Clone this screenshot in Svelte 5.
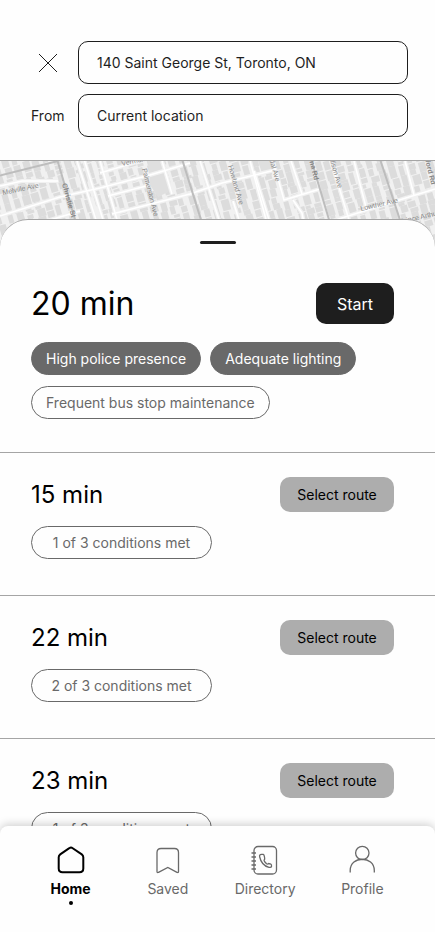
<script lang="ts">
	type Tag = { text: string; met: boolean };
	type Route = { minutes: number; tags: Tag[] };

	let destination = $state("140 Saint George St, Toronto, ON");
	let origin = $state("Current location");
	let selected = $state(0);
	let page = $state("Home");

	const routes: Route[] = [
		{
			minutes: 20,
			tags: [
				{ text: "High police presence", met: true },
				{ text: "Adequate lighting", met: true },
				{ text: "Frequent bus stop maintenance", met: false },
			],
		},
		{ minutes: 15, tags: [{ text: "1 of 3 conditions met", met: false }] },
		{ minutes: 22, tags: [{ text: "2 of 3 conditions met", met: false }] },
		{ minutes: 23, tags: [{ text: "1 of 3 conditions met", met: false }] },
	];

	const pages = ["Home", "Saved", "Directory", "Profile"];

	// houses sit on a grid that is turned with the streets
	function makeHouses() {
		let seed = 7;
		const rand = () => {
			seed = (seed * 16807) % 2147483647;
			return seed / 2147483647;
		};
		const houses = [];
		for (let x = -40; x < 450; x += 10) {
			let y = -20;
			while (y < 220) {
				const h = 3 + Math.round(rand() * 9);
				const w = 5 + Math.round(rand() * 3);
				houses.push({ x: x + Math.round(rand() * 2), y, w, h });
				y += h + Math.round(rand());
			}
		}
		return houses;
	}
	const houses = makeHouses();

	const streets = [
		"M0 55 60 36 100 27 150 14 190 2",
		"M100 12 140 0",
		"M77 0 97 62",
		"M84 -2 104 62",
		"M100 0 118 62",
		"M108 35 150 24",
		"M112 53 190 33 222 22 275 9",
		"M162 0 172 33",
		"M200 0 220 62",
		"M233 40 240 62",
		"M250 0 267 62",
		"M254 10 270 62",
		"M273 0 284 39 320 28",
		"M291 0 302 33",
		"M293 39 302 52 304 62",
		"M334 10 350 62",
		"M354 0 367 50",
		"M326 62 380 45 435 28",
		"M405 0 414 34",
		"M0 25 22 20 58 20",
		"M40 62 80 50",
	];

	const mainRoads = ["M-2 15 58 0", "M57 -2 76 62", "M182 -2 202 62", "M311 -2 330 62", "M380 -2 401 62"];

	const names = [
		{ text: "Melville Ave", x: 3, y: 34, turn: -12, bold: false },
		{ text: "Christie St", x: 62, y: 23, turn: 74, bold: true },
		{ text: "Vermont", x: 122, y: 5, turn: -12, bold: false },
		{ text: "Palmerston Ave", x: 142, y: 8, turn: 76, bold: false },
		{ text: "Howland Ave", x: 228, y: 5, turn: 74, bold: false },
		{ text: "Kendal Ave", x: 266, y: -13, turn: 74, bold: false },
		{ text: "Spadina Rd", x: 305, y: -18, turn: 76, bold: true },
		{ text: "Madison Ave", x: 327, y: -11, turn: 74, bold: false },
		{ text: "Lowther Ave", x: 361, y: 50, turn: -13, bold: false },
		{ text: "Bedford Rd", x: 422, y: -13, turn: 76, bold: true },
		{ text: "Prince Arthur Ave", x: 400, y: 63, turn: -13, bold: false },
	];
</script>

<div class="screen">
	<header class="search">
		<button class="close" aria-label="Close">
			<svg width="20" height="20" viewBox="0 0 20 20"><path d="M1 1 19 19M19 1 1 19" /></svg>
		</button>
		<input type="text" aria-label="Destination" bind:value={destination} />
		<label for="origin">From</label>
		<input type="text" id="origin" bind:value={origin} />
	</header>

	<main>
		<div class="map">
			<svg viewBox="0 0 435 100" preserveAspectRatio="xMidYMin slice" aria-hidden="true">
				<g transform="rotate(-16)" fill="#dcdcdc">
					{#each houses as house}
						<rect x={house.x} y={house.y} width={house.w} height={house.h} />
					{/each}
				</g>
				<path d="M148 0H162L170 30 158 36 150 24ZM258 0 272 0 276 9 262 12Z" fill="#dfdfdf" />
				<g fill="none" stroke="#f1f1f1" stroke-width="4">
					{#each streets as d}
						<path {d} />
					{/each}
				</g>
				<g fill="none" stroke="#ffffff" stroke-width="1.500">
					{#each streets as d}
						<path {d} />
					{/each}
				</g>
				<g fill="none" stroke="#bdbdbd" stroke-width="2">
					{#each mainRoads as d}
						<path {d} />
					{/each}
				</g>
				{#each names as name}
					<text class:bold={name.bold} transform="translate({name.x} {name.y}) rotate({name.turn})">{name.text}</text>
				{/each}
			</svg>
		</div>

		<div class="sheet">
			<div class="handle"></div>
			{#each routes as route, i}
				<section class="route" class:first={i == 0}>
					<div class="routeTop">
						<h2>{route.minutes} min</h2>
						{#if i == 0}
							<button class="start">Start</button>
						{:else}
							<button class="select" aria-pressed={selected == i} onclick={() => (selected = i)}>Select route</button>
						{/if}
					</div>
					<div class="tags">
						{#each route.tags as tag}
							<span class="tag" class:met={tag.met}>{tag.text}</span>
						{/each}
					</div>
				</section>
			{/each}
		</div>
	</main>

	<nav>
		{#each pages as name}
			<a href="#{name.toLowerCase()}" class:active={page == name} onclick={() => (page = name)}>
				<svg width="30" height="30" viewBox="0 0 30 30">
					{#if name == "Home"}
						<path d="M13.3 3.2Q15 2 16.7 3.2L25.8 9.4Q27.3 10.5 27.3 12.3V23.5Q27.3 27.3 23.5 27.3H6.5Q2.7 27.3 2.7 23.5V12.3Q2.7 10.5 4.2 9.4Z" />
					{:else if name == "Saved"}
						<path d="M4 26.500V7.500Q4 3.500 8 3.500H21.500Q25.500 3.500 25.500 7.500V26.500Q25.500 28.200 24 27.300L14.800 22.500 5.500 27.300Q4 28.200 4 26.500Z" />
					{:else if name == "Directory"}
						<rect x="4" y="1.500" width="22.500" height="27.500" rx="4" />
						<path d="M1.500 8H6M1.500 12H6M1.500 16H6M1.500 20H6M1.500 24H6" />
						<path d="M9.700 12Q9 9.500 11.500 9.300L13.300 9.300Q14.200 9.600 14.500 12L14.700 14Q13.500 15.500 14.500 16.500L16.500 18.800Q17.500 19.400 18.700 18.500L20.800 19Q21.800 19.500 21.500 21.500Q21.200 22.700 19 22.300Q11.500 20.500 9.700 12Z" />
					{:else}
						<circle cx="15.300" cy="8" r="6.700" />
						<path d="M3.200 27.500V25.500C3.200 10.500 27.300 10.500 27.300 25.500V27.500" />
					{/if}
				</svg>
				<span>{name}</span>
			</a>
		{/each}
	</nav>
</div>

<style>
	:global(body) {
		background-color: #fefefe;
	}

	.screen {
		display: flex;
		flex-direction: column;
		height: 100vh;
		font-family: "Inter", sans-serif;
		font-size: 14px;
		color: #1e1e1e;
		overflow: hidden;
	}

	button,
	input {
		box-sizing: border-box;
		font: inherit;
		color: inherit;
	}

	button {
		border: none;
		padding: 0;
		cursor: pointer;
	}

	.search {
		display: grid;
		grid-template-columns: 34px 1fr;
		align-items: center;
		gap: 10px 13px;
		padding: 41px 27px 23px 31px;
		border-bottom: 1px solid #a5a5a5;
	}

	.search input {
		width: 100%;
		height: 43px;
		padding: 0 18px;
		border: 1px solid #1e1e1e;
		border-radius: 10px;
		background-color: #fefefe;
	}

	.close {
		display: flex;
		justify-content: center;
		background: none;
	}

	.close svg {
		fill: none;
		stroke: #1e1e1e;
	}

	main {
		flex: 1;
		min-height: 0;
		overflow: hidden;
	}

	.map {
		height: 100px;
		background-color: #f1f1f1;
	}

	.map svg {
		display: block;
		width: 100%;
		height: 100%;
	}

	.map text {
		font-family: "Liberation Sans", sans-serif;
		font-size: 7px;
		fill: #858585;
	}

	.map .bold {
		font-weight: bold;
	}

	.sheet {
		position: relative;
		margin-top: -42px;
		padding-top: 21px;
		border-top: 1px solid #a5a5a5;
		border-radius: 28px 28px 0 0;
		background-color: #fefefe;
	}

	.handle {
		width: 36px;
		height: 3px;
		margin: 0 auto;
		border-radius: 2px;
		background-color: #1e1e1e;
	}

	.route {
		padding: 24px 41px 36px 31px;
		border-top: 1px solid #a5a5a5;
	}

	.route.first {
		padding-top: 39px;
		padding-bottom: 33px;
		border-top: none;
	}

	.routeTop {
		display: flex;
		justify-content: space-between;
		align-items: center;
		margin-bottom: 14px;
	}

	.first .routeTop {
		margin-bottom: 18px;
	}

	h2 {
		margin: 0;
		font-size: 24px;
		font-weight: 400;
		line-height: 35px;
		color: #000000;
	}

	.first h2 {
		font-size: 32px;
		line-height: 41px;
	}

	.start {
		width: 78px;
		height: 41px;
		border-radius: 10px;
		background-color: #1e1e1e;
		color: #fefefe;
		font-size: 16px;
	}

	.select {
		width: 114px;
		height: 35px;
		border-radius: 10px;
		background-color: #adadad;
		color: #000000;
	}

	.tags {
		display: flex;
		flex-wrap: wrap;
		gap: 11px 9px;
	}

	.tag {
		box-sizing: border-box;
		min-width: 181px;
		padding: 0 16px;
		border: 1px solid #696969;
		border-radius: 17px;
		line-height: 31px;
		color: #696969;
		text-align: center;
	}

	.first .tag {
		min-width: 0;
		padding: 0 14px;
	}

	.tag.met {
		background-color: #696969;
		color: #fefefe;
	}

	nav {
		position: relative;
		display: grid;
		grid-template-columns: repeat(4, 1fr);
		padding: 19px 24px 27px 22px;
		border-radius: 8px 8px 0 0;
		background-color: #fefefe;
		box-shadow: 0 -2px 8px rgba(0, 0, 0, 0.18);
	}

	nav a {
		display: flex;
		flex-direction: column;
		align-items: center;
		color: #696969;
		line-height: 18px;
		text-decoration: none;
	}

	nav svg {
		margin-bottom: 5px;
		fill: none;
		stroke: currentColor;
		stroke-width: 1.3;
	}

	nav .active {
		color: #000000;
		font-weight: 700;
	}

	nav .active svg {
		stroke-width: 2;
	}

	nav a::after {
		content: "";
		width: 4px;
		height: 4px;
		margin-top: 3px;
		border-radius: 50%;
	}

	nav .active::after {
		background-color: #000000;
	}
</style>
